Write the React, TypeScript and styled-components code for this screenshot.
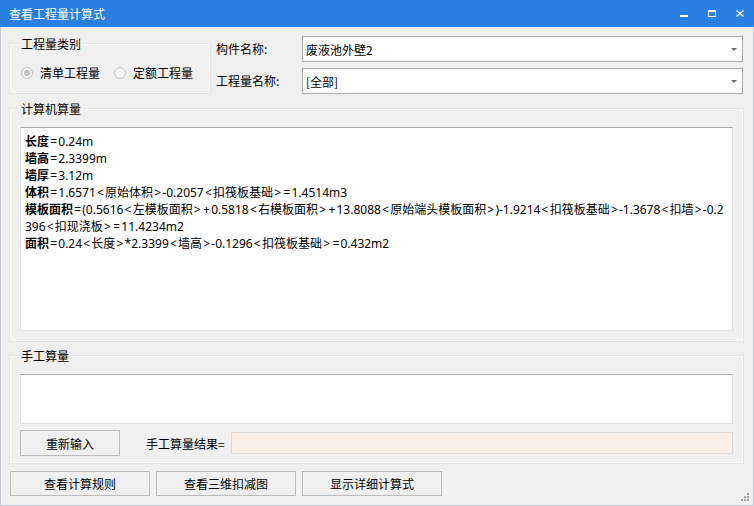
import styled, { createGlobalStyle } from 'styled-components'

const GlobalStyle = createGlobalStyle`
	html, body {
		margin: 0;
		padding: 0;
		background: #fff;
	}
	body {
		font-family: "Noto Sans CJK SC", "Noto Sans", sans-serif;
		font-size: 12px;
		color: #000;
	}
`

const Window = styled.div`
	width: 754px;
	height: 506px;
	display: flex;
	flex-direction: column;
	background: #f0f0f0;
	overflow: hidden;
`
const TitleBar = styled.div`
	flex: none;
	height: 27px;
	display: flex;
	align-items: center;
	padding-left: 9px;
	background: #2b7fe0;
	color: #fff;
`
const Title = styled.span`
	flex: 1;
	font-size: 12px;
	line-height: 14px;
`
const Controls = styled.div`
	display: flex;
	align-self: stretch;
`
const CtrlBtn = styled.div`
	width: 28px;
	height: 27px;
	display: flex;
`
const Body = styled.div`
	position: relative;
	flex: 1;
	display: flex;
	flex-direction: column;
	padding: 9px 10px 0 9px;
	border: 1px solid #c3c9d1;
	border-top: none;
`
const TopRow = styled.div`
	display: flex;
	align-items: flex-start;
`
const Group = styled.div<{ $top?: number }>`
	position: relative;
	box-sizing: border-box;
	border: 1px solid #fbfbfb;
	box-shadow: 0 0 0 1px #e6e6e6;
	margin-top: ${(p) => p.$top ?? 0}px;
`
const Legend = styled.span`
	position: absolute;
	top: -9px;
	left: 8px;
	padding: 0 2px;
	line-height: 16px;
	background: #f0f0f0;
	white-space: nowrap;
`
const CategoryBox = styled(Group)`
	width: 200px;
	height: 49px;
	padding: 22px 0 0 10px;
	display: flex;
	align-items: center;
	gap: 14px;
	align-content: flex-start;
	flex-wrap: wrap;
`
const RadioItem = styled.label`
	display: flex;
	align-items: center;
	gap: 7px;
	height: 12px;
	line-height: 12px;
`
const RadioCircle = styled.span<{ $checked?: boolean }>`
	box-sizing: border-box;
	width: 12px;
	height: 12px;
	border-radius: 50%;
	border: 1px solid #c2c2c2;
	background: #f4f4f4;
	display: flex;
	align-items: center;
	justify-content: center;
	&::after {
		content: '';
		width: 6px;
		height: 6px;
		border-radius: 50%;
		background: ${(p) => (p.$checked ? '#c0c0c0' : 'transparent')};
	}
`
const FormGrid = styled.div`
	flex: 1;
	margin-left: 6px;
	display: grid;
	grid-template-columns: 86px 1fr;
	row-gap: 6px;
	align-items: center;
`
const FieldLabel = styled.span`
	line-height: 16px;
`
const Combo = styled.div`
	box-sizing: border-box;
	height: 26px;
	display: flex;
	align-items: center;
	padding: 0 5px 0 3px;
	background: #fff;
	border: 1px solid #acacac;
`
const ComboText = styled.span`
	flex: 1;
`
const Caret = styled.span`
	width: 0;
	height: 0;
	border-left: 3px solid transparent;
	border-right: 3px solid transparent;
	border-top: 3px solid #666;
	margin-top: 1px;
`
const ComputeBox = styled(Group)`
	padding: 17px 9px 9px 9px;
`
const TextArea = styled.div<{ $h: number }>`
	box-sizing: border-box;
	height: ${(p) => p.$h}px;
	background: #fff;
	border: 1px solid #dfe3e8;
	border-top-color: #a7a7a7;
	overflow: hidden;
`
const CalcText = styled.div`
	padding: 5px 4px;
	line-height: 17px;
	white-space: nowrap;
	font-family: "Noto Sans", "Noto Sans CJK SC", sans-serif;
`
const Strong = styled.b`
	font-weight: 700;
`
const Sym = styled.span`
	padding: 0 1.2px;
`
const ManualBox = styled(Group)`
	padding: 17px 9px 6px 9px;
`
const ManualRow = styled.div`
	margin-top: 6px;
	height: 26px;
	display: flex;
	align-items: center;
`
const Button = styled.div<{ $w: number; $h?: number }>`
	box-sizing: border-box;
	width: ${(p) => p.$w}px;
	height: ${(p) => p.$h ?? 25}px;
	display: flex;
	align-items: center;
	justify-content: center;
	background: #f0f0f0;
	border: 1px solid #bcbcbc;
`
const ResultLabel = styled.span`
	margin-left: 26px;
	white-space: nowrap;
`
const ResultInput = styled.div`
	box-sizing: border-box;
	flex: 1;
	height: 22px;
	margin-left: 6px;
	background: #faf0e7;
	border: 1px solid #dcdcdc;
`
const ButtonBar = styled.div`
	margin-top: 8px;
	display: flex;
	gap: 6px;
`
const Grip = styled.svg`
	position: absolute;
	right: 3px;
	bottom: 3px;
`

type CalcLine = { label?: string; text: string }

const calcLines: CalcLine[] = [
	{ label: '长度', text: '=0.24m' },
	{ label: '墙高', text: '=2.3399m' },
	{ label: '墙厚', text: '=3.12m' },
	{ label: '体积', text: '=1.6571<原始体积>-0.2057<扣筏板基础>=1.4514m3' },
	{
		label: '模板面积',
		text: '=(0.5616<左模板面积>+0.5818<右模板面积>+13.8088<原始端头模板面积>)-1.9214<扣筏板基础>-1.3678<扣墙>-0.2',
	},
	{ text: '396<扣现浇板>=11.4234m2' },
	{ label: '面积', text: '=0.24<长度>*2.3399<墙高>-0.1296<扣筏板基础>=0.432m2' },
]

// the original font draws < > = + wide, so give them some room
function renderFormula(text: string) {
	return text.split(/([<>=+])/).map((part, i) =>
		/^[<>=+]$/.test(part) ? <Sym key={i}>{part}</Sym> : part
	)
}

export default function App() {
	return (
		<>
			<GlobalStyle />
			<Window>
				<TitleBar>
					<Title>查看工程量计算式</Title>
					<Controls>
						<CtrlBtn>
							<svg width="28" height="27" viewBox="0 0 28 27">
								<rect x="10" y="15" width="8" height="2" fill="#fff" />
							</svg>
						</CtrlBtn>
						<CtrlBtn>
							<svg width="28" height="27" viewBox="0 0 28 27">
								<rect x="10.5" y="10.5" width="7" height="6" fill="none" stroke="#fff" />
								<rect x="10" y="10" width="8" height="2" fill="#fff" />
							</svg>
						</CtrlBtn>
						<CtrlBtn>
							<svg width="28" height="27" viewBox="0 0 28 27">
								<path d="M10.5 10.5 L17.5 16.5 M17.5 10.5 L10.5 16.5" stroke="#fff" strokeWidth="1.4" />
							</svg>
						</CtrlBtn>
					</Controls>
				</TitleBar>
				<Body>
					<TopRow>
						<CategoryBox $top={8}>
							<Legend>工程量类别</Legend>
							<RadioItem>
								<RadioCircle $checked />
								清单工程量
							</RadioItem>
							<RadioItem>
								<RadioCircle />
								定额工程量
							</RadioItem>
						</CategoryBox>
						<FormGrid>
							<FieldLabel>构件名称:</FieldLabel>
							<Combo>
								<ComboText>废液池外壁2</ComboText>
								<Caret />
							</Combo>
							<FieldLabel>工程量名称:</FieldLabel>
							<Combo>
								<ComboText>[全部]</ComboText>
								<Caret />
							</Combo>
						</FormGrid>
					</TopRow>
					<ComputeBox $top={15}>
						<Legend>计算机算量</Legend>
						<TextArea $h={204}>
							<CalcText>
								{calcLines.map((line, i) => (
									<div key={i}>
										{line.label && <Strong>{line.label}</Strong>}
										{renderFormula(line.text)}
									</div>
								))}
							</CalcText>
						</TextArea>
					</ComputeBox>
					<ManualBox $top={15}>
						<Legend>手工算量</Legend>
						<TextArea $h={50} />
						<ManualRow>
							<Button $w={100} $h={26}>
								重新输入
							</Button>
							<ResultLabel>手工算量结果=</ResultLabel>
							<ResultInput />
						</ManualRow>
					</ManualBox>
					<ButtonBar>
						<Button $w={140}>查看计算规则</Button>
						<Button $w={140}>查看三维扣减图</Button>
						<Button $w={140}>显示详细计算式</Button>
					</ButtonBar>
					<Grip width="9" height="9" viewBox="0 0 9 9">
						<g fill="#9aa0a8">
							<rect x="6" y="0" width="2" height="2" />
							<rect x="3" y="3" width="2" height="2" />
							<rect x="6" y="3" width="2" height="2" />
							<rect x="0" y="6" width="2" height="2" />
							<rect x="3" y="6" width="2" height="2" />
							<rect x="6" y="6" width="2" height="2" />
						</g>
					</Grip>
				</Body>
			</Window>
		</>
	)
}
